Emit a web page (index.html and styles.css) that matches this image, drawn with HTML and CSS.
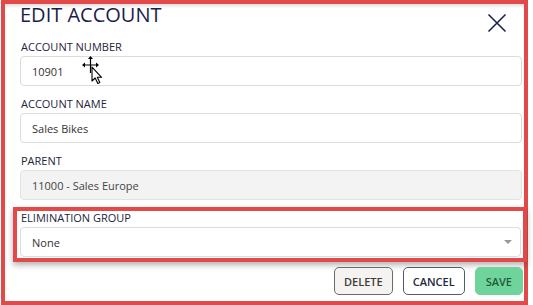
FILE: index.html
```html
<!DOCTYPE html>
<html lang="en">
<head>
    <meta charset="UTF-8">
    <meta name="viewport" content="width=device-width, initial-scale=1.0">
    <title>Edit Account</title>
    <link rel="stylesheet" href="styles.css">
</head>
<body>

    <div class="modal">
        <div class="header">
            <h1>EDIT ACCOUNT</h1>
            <svg class="close" width="20" height="20" viewBox="0 0 20 20">
                <path d="M1.5 1.5 L18.5 18.5 M18.5 1.5 L1.5 18.5" stroke="#1d1f4d" stroke-width="1.6" fill="none"/>
            </svg>
        </div>

        <div class="field">
            <label for="numero">ACCOUNT NUMBER</label>
            <input type="text" id="numero" value="10901">
        </div>

        <div class="field">
            <label for="nombre">ACCOUNT NAME</label>
            <input type="text" id="nombre" value="Sales Bikes">
        </div>

        <div class="field">
            <label for="padre">PARENT</label>
            <input type="text" id="padre" value="11000 - Sales Europe" disabled>
        </div>

        <div class="field highlight">
            <label>ELIMINATION GROUP</label>
            <div class="select">
                <span>None</span>
                <span class="arrow"></span>
            </div>
        </div>

        <div class="actions">
            <button class="btn delete">DELETE</button>
            <button class="btn cancel">CANCEL</button>
            <button class="btn save">SAVE</button>
        </div>

        <!-- cursor sobre el campo -->
        <svg class="cursor" width="26" height="32" viewBox="0 0 26 32">
            <path d="M3 11 H18 M10.5 3.5 V19" stroke="#000" stroke-width="1.2" fill="none"/>
            <path d="M2 11 L5 8.5 L5 13.5 Z M19 11 L16 8.5 L16 13.5 Z M10.5 2 L8 5 L13 5 Z" fill="#000"/>
            <path d="M12 13 L12 27 L15.2 24 L17.8 29.5 L19.8 28.6 L17.3 23.3 L21.6 23.3 Z" fill="#fff" stroke="#000" stroke-width="1.1" stroke-linejoin="round"/>
        </svg>
    </div>

</body>
</html>
```

FILE: styles.css
```css
body {
    font-family: "Open Sans", Arial, sans-serif;
    background-color: #fff;
    margin: 0;
    padding: 0;
}

.modal {
    position: relative;
    width: 527px;
    height: 305px;
    margin-left: 1px;
    box-sizing: border-box;
    border: 4px solid #e24a4a;
    padding: 0 2px 0 15px;
    background-color: #fff;
    box-shadow: inset 0 3px 4px -2px rgba(0, 0, 0, 0.2);
}

.header {
    display: flex;
    justify-content: space-between;
    align-items: flex-start;
    height: 22px;
    margin-bottom: 14px;
}

h1 {
    margin: 0;
    font-size: 20px;
    line-height: 22px;
    font-weight: 500;
    color: #1b1d4a;
}

.close {
    margin-top: 9px;
    margin-right: 15px;
}

.field {
    display: flex;
    flex-direction: column;
    margin-bottom: 11px;
}

label {
    font-size: 11px;
    line-height: 14px;
    font-weight: 500;
    color: #23243a;
    margin-bottom: 2px;
    padding-left: 1px;
}

input,
.select {
    width: 100%;
    height: 30px;
    padding: 0 11px;
    box-sizing: border-box;
    border: 1px solid #dcdcdc;
    border-radius: 4px;
    font-family: "Open Sans", Arial, sans-serif;
    font-size: 11px;
    color: #333;
    background-color: #fff;
}

input:disabled {
    background-color: #f3f3f3;
    border-color: #e2e2e2;
    color: #444;
}

.select {
    display: flex;
    justify-content: space-between;
    align-items: center;
    padding-right: 8px;
}

.arrow {
    width: 0;
    height: 0;
    border-left: 4px solid transparent;
    border-right: 4px solid transparent;
    border-top: 4px solid #999;
}

.highlight {
    margin: -4px -5px 0 -7px;
    padding: 0 2px 1px 3px;
    border: 4px solid #e24a4a;
    box-shadow: 0 3px 6px rgba(0, 0, 0, 0.3);
}

.actions {
    display: flex;
    justify-content: flex-end;
    gap: 10px;
    margin-top: 5px;
    margin-right: -1px;
}

.btn {
    height: 28px;
    padding: 0 9px;
    border-radius: 5px;
    font-family: "Open Sans", Arial, sans-serif;
    font-size: 11px;
    font-weight: 600;
    cursor: pointer;
}

.delete {
    background-color: #f5f3f1;
    border: 1px solid #6b6b6b;
    color: #3f3b39;
}

.cancel {
    background-color: #fff;
    border: 1px solid #555a66;
    color: #23283f;
}

.save {
    background-color: #6fd49b;
    border: 1px solid #6fd49b;
    color: #1f5a3a;
    padding: 0 10px;
}

.cursor {
    position: absolute;
    left: 75px;
    top: 50px;
}
```
